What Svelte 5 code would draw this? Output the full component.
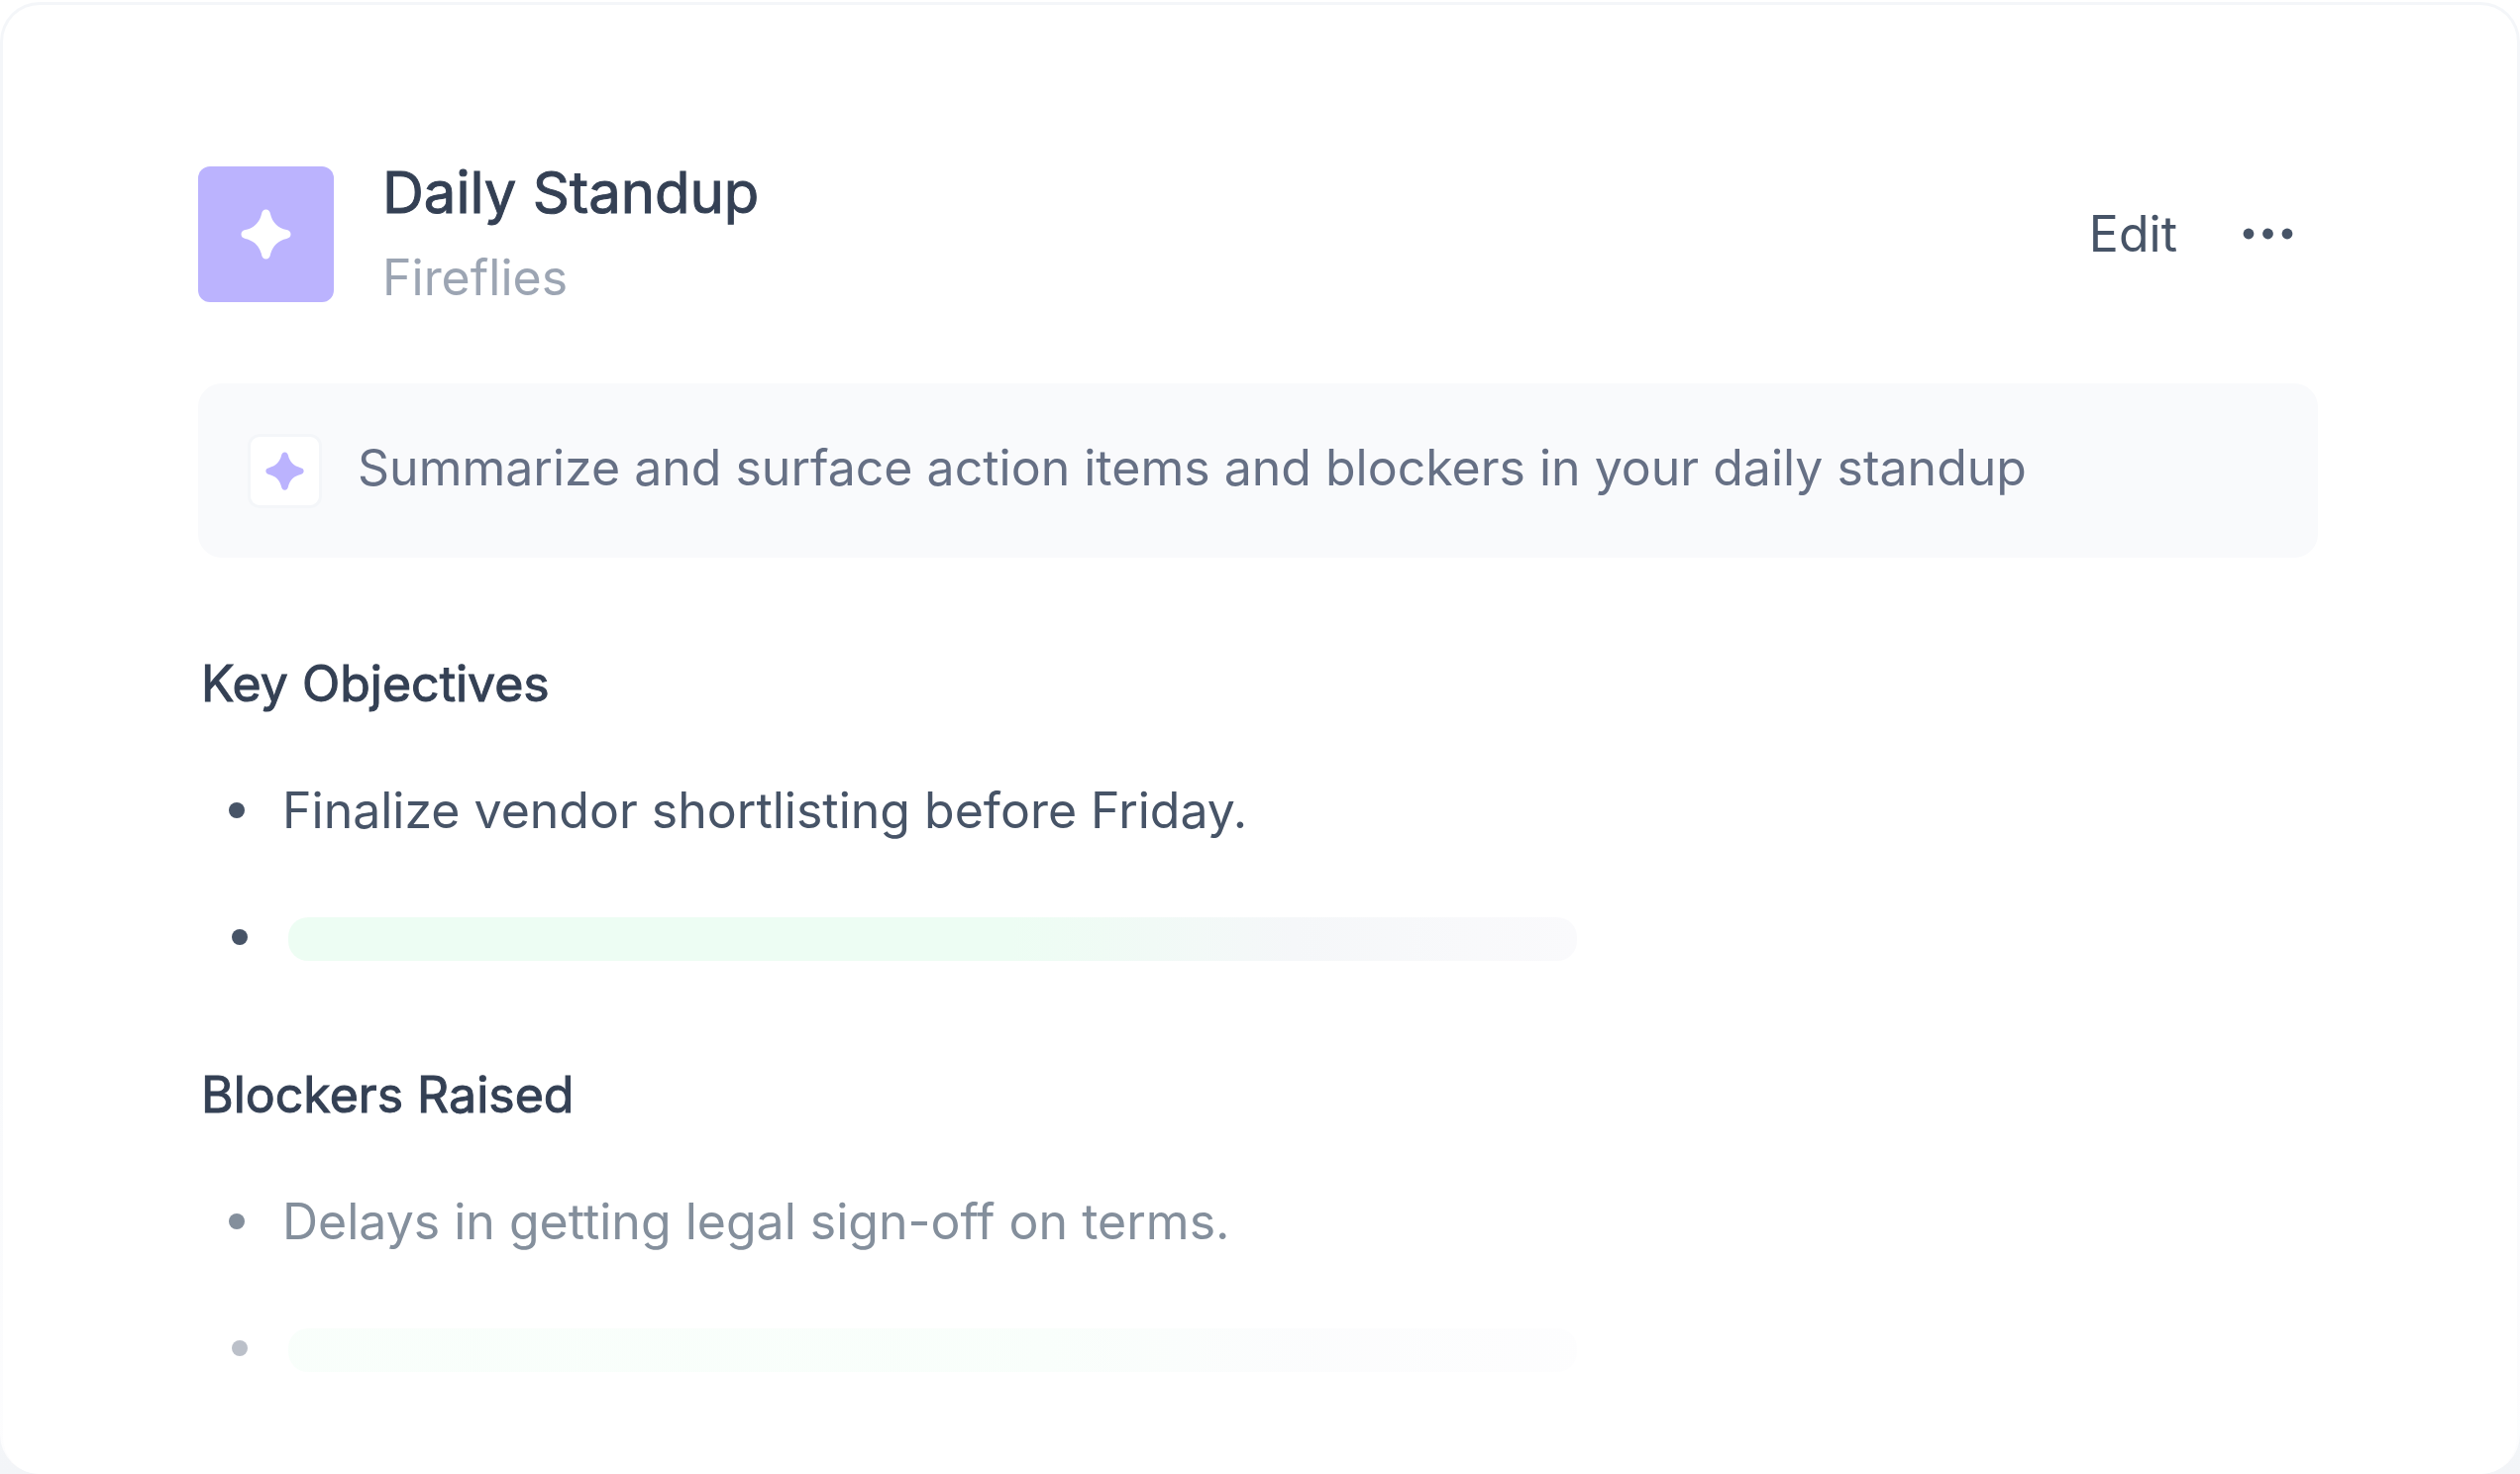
<script>
  const sections = [
    { title: 'Key Objectives', item: 'Finalize vendor shortlisting before Friday.', tone: 'solid' },
    { title: 'Blockers Raised', item: 'Delays in getting legal sign-off on terms.', tone: 'faded' }
  ];
</script>

{#snippet spark()}
  <svg class="spark" viewBox="0 0 52 52" aria-hidden="true">
    <path
      d="M26 0.5C28.6 0.5 30 2.2 30.5 4.8C32.4 13.6 38.4 19.6 47.2 21.5C49.8 22 51.5 23.4 51.5 26C51.5 28.6 49.8 30 47.2 30.5C38.4 32.4 32.4 38.4 30.5 47.2C30 49.8 28.6 51.5 26 51.5C23.4 51.5 22 49.8 21.5 47.2C19.6 38.4 13.6 32.4 4.8 30.5C2.2 30 0.5 28.6 0.5 26C0.5 23.4 2.2 22 4.8 21.5C13.6 19.6 19.6 13.6 21.5 4.8C22 2.2 23.4 0.5 26 0.5Z"
      fill="currentColor"
    />
  </svg>
{/snippet}

<div class="page">
  <div class="frame">
    <main class="card">
      <header>
        <div class="logo">{@render spark()}</div>
        <div class="names">
          <h1>Daily Standup</h1>
          <p>Fireflies</p>
        </div>
        <div class="actions">
          <button class="edit" type="button">Edit</button>
          <button class="more" type="button" aria-label="More options">
            <svg viewBox="0 0 52 12" aria-hidden="true">
              <circle cx="6" cy="6" r="5.4" />
              <circle cx="25.5" cy="6" r="5.4" />
              <circle cx="45" cy="6" r="5.4" />
            </svg>
          </button>
        </div>
      </header>

      <div class="prompt">
        <span class="badge">{@render spark()}</span>
        <p>Summarize and surface action items and blockers in your daily standup</p>
      </div>

      {#each sections as section}
        <section class={section.tone}>
          <h2>{section.title}</h2>
          <ul>
            <li class="item">{section.item}</li>
            <li class="pending"><span class="bar"></span></li>
          </ul>
        </section>
      {/each}
    </main>
  </div>
</div>

<style>
  :global(body) {
    margin: 0;
    background: #fff;
  }
  .page {
    box-sizing: border-box;
    min-height: 100vh;
    display: flex;
    padding-top: 2px;
    background: linear-gradient(#fff 50%, #f3f5f8);
    font-family: Inter, 'Liberation Sans', sans-serif;
    color: #475467;
  }
  .frame {
    flex: 1;
    display: flex;
    padding: 3px 3px 0;
    border-radius: 40px;
    background: linear-gradient(#f4f6f9 50%, #fdfdfe);
  }
  .card {
    flex: 1;
    box-sizing: border-box;
    padding: 160px 201px 60px 197px;
    border-radius: 37px;
    background: #fff;
  }
  h1,
  h2,
  p,
  ul {
    margin: 0;
    padding: 0;
    font-weight: 400;
  }
  header {
    display: flex;
    align-items: center;
    height: 142px;
  }
  .logo {
    display: grid;
    place-items: center;
    width: 137px;
    height: 137px;
    border-radius: 12px;
    background: #bbb3fe;
    color: #fff;
  }
  .logo .spark {
    width: 51px;
    height: 51px;
  }
  .spark,
  .more svg {
    display: block;
  }
  .names {
    flex: 1;
    margin-left: 49px;
    padding-bottom: 4px;
  }
  h1 {
    font-size: 58px;
    line-height: 72px;
    color: #344054;
    -webkit-text-stroke: 1px #344054;
  }
  .names p {
    margin-top: 20px;
    font-size: 50px;
    line-height: 60px;
    color: #9ca5b3;
  }
  .actions {
    display: flex;
    align-items: center;
    gap: 66px;
    margin-right: 24px;
  }
  button {
    padding: 0;
    border: 0;
    background: none;
    color: inherit;
    cursor: pointer;
  }
  .edit {
    font: 400 50px/60px Inter, sans-serif;
  }
  .more svg {
    width: 52px;
    height: 12px;
    fill: currentColor;
  }
  .prompt {
    display: flex;
    align-items: center;
    gap: 36px;
    box-sizing: border-box;
    min-height: 176px;
    margin-top: 80px;
    padding: 0 50px;
    border-radius: 24px;
    background: #f9fafc;
    color: #667085;
    font-size: 50px;
    line-height: 60px;
  }
  .prompt p {
    padding-bottom: 6px;
  }
  .badge {
    display: grid;
    place-items: center;
    box-sizing: border-box;
    width: 75px;
    height: 75px;
    border: 3px solid #f4f6f9;
    border-radius: 12px;
    background: #fff;
    color: #bbb3fe;
  }
  .badge .spark {
    width: 39px;
    height: 39px;
  }
  section {
    padding: 97px 0 0 3px;
  }
  h2 {
    font-size: 50px;
    line-height: 60px;
    color: #344054;
    -webkit-text-stroke: 1px #344054;
  }
  ul {
    padding-bottom: 2px;
    list-style: none;
  }
  li {
    display: flex;
    align-items: center;
    height: 60px;
    margin-top: 68px;
    font-size: 50px;
    line-height: 60px;
  }
  li::before {
    content: '';
    width: 16px;
    height: 16px;
    margin: 0 38px 0 28px;
    border-radius: 50%;
    background: currentColor;
  }
  .pending::before {
    margin: 0 41px 0 31px;
  }
  .bar {
    width: 1301px;
    max-width: 100%;
    height: 44px;
    margin-top: 4px;
    border-radius: 20px;
    background: linear-gradient(90deg, #edfdf3 56%, #f5f7f9 78%, #fafafc);
  }
  .faded .item {
    color: #848f9c;
  }
  .faded .pending {
    color: #bbc0c9;
  }
  .faded .bar {
    opacity: 0.35;
  }
</style>
